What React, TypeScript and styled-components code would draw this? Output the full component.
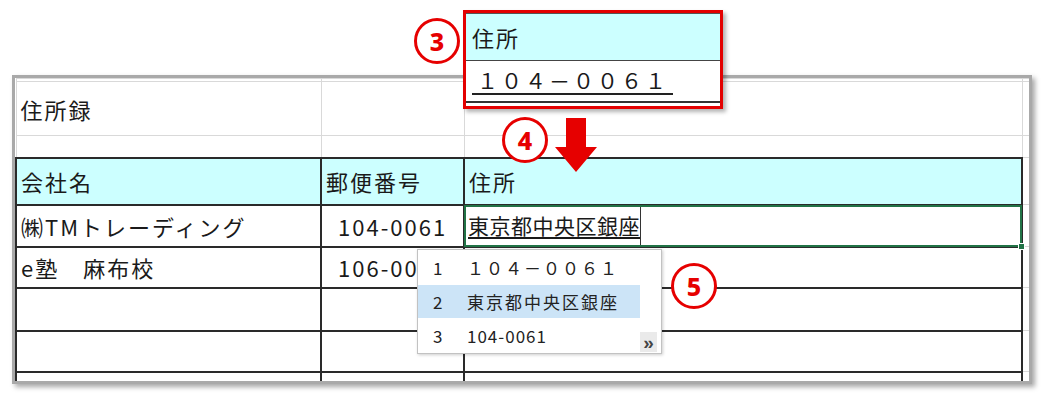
import React from "react";
import styled, { createGlobalStyle } from "styled-components";

const GlobalStyle = createGlobalStyle`
  html, body {
    margin: 0;
    padding: 0;
    background: #fff;
  }
  body {
    font-family: "Noto Sans CJK JP", "Noto Sans", sans-serif;
    color: #1f1f1f;
  }
`;

type Kind = "grid" | "head" | "data";

const App = () => {
  return (
    <Page>
      <GlobalStyle />
      <Frame>
        <Sheet>
          <colgroup>
            <Col $w={305} />
            <Col $w={143} />
            <Col $w={558} />
            <Col $w={8} />
          </colgroup>
          <tbody>
            <Row $h={3}>
              <Cell $kind="grid" />
              <Cell $kind="grid" />
              <Cell $kind="grid" />
              <Cell $kind="grid" />
            </Row>
            <Row $h={54}>
              <Cell $kind="grid">住所録</Cell>
              <Cell $kind="grid" />
              <Cell $kind="grid" />
              <Cell $kind="grid" />
            </Row>
            <Row $h={22}>
              <Cell $kind="grid" />
              <Cell $kind="grid" />
              <Cell $kind="grid" />
              <Cell $kind="grid" />
            </Row>
            <Row $h={47}>
              <Cell $kind="head">会社名</Cell>
              <Cell $kind="head">郵便番号</Cell>
              <Cell $kind="head">住所</Cell>
              <Cell $kind="grid" />
            </Row>
            <Row $h={42}>
              <Cell $kind="data">㈱TMトレーディング</Cell>
              <Cell $kind="data" $indent>
                104-0061
              </Cell>
              <SelectedCell $kind="data">
                <EditArea>
                  <EditText>東京都中央区銀座</EditText>
                </EditArea>
                <FillHandle />
              </SelectedCell>
              <Cell $kind="grid" />
            </Row>
            <Row $h={41}>
              <Cell $kind="data">e塾　麻布校</Cell>
              <Cell $kind="data" $indent>
                106-00
              </Cell>
              <Cell $kind="data" />
              <Cell $kind="grid" />
            </Row>
            <Row $h={43}>
              <Cell $kind="data" />
              <Cell $kind="data" />
              <Cell $kind="data" />
              <Cell $kind="grid" />
            </Row>
            <Row $h={41}>
              <Cell $kind="data" />
              <Cell $kind="data" />
              <Cell $kind="data" />
              <Cell $kind="grid" />
            </Row>
            <Row $h={40}>
              <Cell $kind="data" />
              <Cell $kind="data" />
              <Cell $kind="data" />
              <Cell $kind="grid" />
            </Row>
          </tbody>
        </Sheet>
      </Frame>

      <Callout>
        <CalloutHead>住所</CalloutHead>
        <CalloutBody>
          <Zip>１０４－００６１</Zip>
        </CalloutBody>
      </Callout>

      <Badge $x={414} $y={18}>3</Badge>
      <Badge $x={502} $y={117}>4</Badge>
      <Badge $x={671} $y={263}>5</Badge>

      <Arrow width="42" height="54" viewBox="0 0 42 54">
        <polygon points="11,0 31,0 31,29 42,29 21,54 0,29 11,29" fill="#e60000" />
      </Arrow>

      <Suggest>
        <SuggestItem $h={35}>
          <Num>1</Num>
          <Label $ls={2}>１０４－００６１</Label>
        </SuggestItem>
        <SuggestItem $h={33} $active>
          <Num>2</Num>
          <Label $ls={2}>東京都中央区銀座</Label>
        </SuggestItem>
        <SuggestItem $h={35}>
          <Num>3</Num>
          <Label $ls={1}>104-0061</Label>
        </SuggestItem>
        <More>»</More>
      </Suggest>
    </Page>
  );
};

export default App;

const Page = styled.div`
  position: relative;
  width: 1044px;
  height: 397px;
  overflow: hidden;
  box-sizing: border-box;
  padding: 75px 0 0 12px;
`;

const Frame = styled.div`
  width: 1020px;
  height: 309px;
  box-sizing: border-box;
  border: 3px solid #a9a9a9;
  background: #fff;
  box-shadow: 3px 3px 5px rgba(0, 0, 0, 0.35);
  overflow: hidden;
`;

const Sheet = styled.table`
  width: 1014px;
  table-layout: fixed;
  border-collapse: collapse;
  border-spacing: 0;
`;

const Col = styled.col<{ $w: number }>`
  width: ${({ $w }) => $w}px;
`;

const Row = styled.tr<{ $h: number }>`
  height: ${({ $h }) => $h}px;
`;

const Cell = styled.td<{ $kind: Kind; $indent?: boolean }>`
  padding: 0 0 0 ${({ $indent }) => ($indent ? "16px" : "4px")};
  font-size: 22px;
  letter-spacing: 2px;
  line-height: 1;
  white-space: nowrap;
  overflow: visible;
  vertical-align: middle;
  color: #1a1a1a;
  border: ${({ $kind }) =>
    $kind === "grid" ? "1px solid #d9d9d9" : "2px solid #2a2a2a"};
  background: ${({ $kind }) => ($kind === "head" ? "#ccffff" : "#fff")};
`;

const SelectedCell = styled(Cell)`
  position: relative;
  padding-left: 1px;

  &::after {
    content: "";
    position: absolute;
    inset: -1px;
    border: 2px solid #217346;
    pointer-events: none;
  }
`;

const EditArea = styled.div`
  display: flex;
  height: 40px;
`;

const EditText = styled.span`
  display: flex;
  align-items: center;
  padding: 0 0 0 2px;
  border-right: 1px solid #333;
  font-size: 21px;
  letter-spacing: 0.5px;
  text-decoration: underline;
  text-decoration-thickness: 2px;
  text-underline-offset: 3px;
`;

const FillHandle = styled.span`
  position: absolute;
  right: -4px;
  bottom: -4px;
  width: 5px;
  height: 5px;
  background: #217346;
  border: 1px solid #fff;
  z-index: 1;
`;

const Callout = styled.div`
  position: absolute;
  left: 463px;
  top: 10px;
  width: 260px;
  height: 99px;
  box-sizing: border-box;
  border: 3px solid #e30000;
  background: #fff;
  box-shadow: 3px 3px 4px rgba(0, 0, 0, 0.3);
  display: flex;
  flex-direction: column;
`;

const CalloutHead = styled.div`
  height: 48px;
  box-sizing: border-box;
  display: flex;
  align-items: center;
  padding-left: 6px;
  background: #ccffff;
  border-top: 1px solid #555;
  border-bottom: 1px solid #444;
  font-size: 22px;
  letter-spacing: 2px;
  color: #1a1a1a;
`;

const CalloutBody = styled.div`
  height: 42px;
  box-sizing: border-box;
  display: flex;
  align-items: center;
  padding-left: 6px;
  border-bottom: 2px solid #333;
`;

const Zip = styled.span`
  font-size: 21px;
  letter-spacing: 3px;
  line-height: 1.25;
  padding: 0 4px 0 5px;
  border-bottom: 2px solid #222;
  color: #1a1a1a;
`;

const Badge = styled.div<{ $x: number; $y: number }>`
  position: absolute;
  left: ${({ $x }) => $x}px;
  top: ${({ $y }) => $y}px;
  width: 46px;
  height: 46px;
  box-sizing: border-box;
  border: 3px solid #e60000;
  border-radius: 50%;
  background: #fff;
  color: #e60000;
  font-family: "Noto Sans", sans-serif;
  font-weight: 800;
  font-size: 25px;
  display: flex;
  align-items: center;
  justify-content: center;
`;

const Arrow = styled.svg`
  position: absolute;
  left: 555px;
  top: 118px;
`;

const Suggest = styled.div`
  position: absolute;
  left: 417px;
  top: 249px;
  width: 245px;
  height: 105px;
  box-sizing: border-box;
  border: 1px solid #c2c2c2;
  background: #fff;
  box-shadow: 1px 1px 3px rgba(0, 0, 0, 0.2);
`;

const SuggestItem = styled.div<{ $h: number; $active?: boolean }>`
  display: flex;
  align-items: center;
  width: 222px;
  height: ${({ $h }) => $h}px;
  background: ${({ $active }) => ($active ? "#cce4f7" : "transparent")};
  color: #222;
`;

const Num = styled.span`
  width: 49px;
  box-sizing: border-box;
  padding-left: 15px;
  font-size: 17px;
`;

const Label = styled.span<{ $ls: number }>`
  font-size: 17px;
  letter-spacing: ${({ $ls }) => $ls}px;
  white-space: nowrap;
`;

const More = styled.span`
  position: absolute;
  right: 4px;
  bottom: 1px;
  width: 17px;
  height: 20px;
  background: #eaeaea;
  color: #444;
  font-family: "Liberation Sans", sans-serif;
  font-weight: 700;
  font-size: 19px;
  line-height: 1;
  display: flex;
  align-items: center;
  justify-content: center;
`;
